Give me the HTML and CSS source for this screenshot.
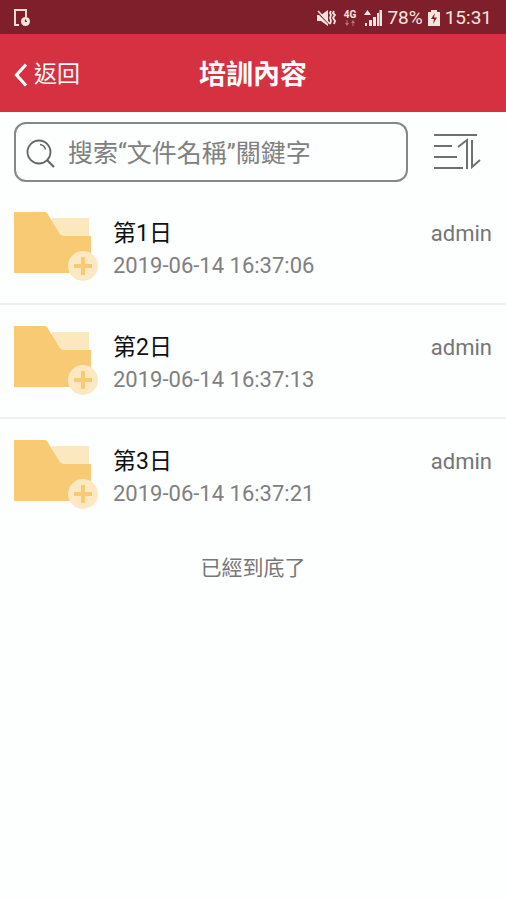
FILE: index.html
```html
<!DOCTYPE html>
<html lang="zh-Hant">

<head>
  <meta charset="utf-8">
  <meta name="viewport" content="width=device-width, initial-scale=1">
  <title>培訓內容</title>
  <link rel="stylesheet" href="styles.css">
</head>

<body>
  <div class="status-bar">
    <svg class="status-note" width="18" height="20" viewBox="0 0 18 20">
      <path d="M6 17H2V2h11v7" fill="none" stroke="#f7dcd8" stroke-width="2" />
      <circle cx="12.500" cy="13.500" r="4.500" fill="#f7e6e0" />
      <path d="M12.500 11.500v2H14" fill="none" stroke="#7f1f2b" stroke-width="1.200" />
    </svg>
    <div class="status-right">
      <svg width="20" height="18" viewBox="0 0 20 18">
        <path d="M1 6h4l7-5v16l-7-5H1z" fill="#f7e6e0" />
        <path d="M2 4l11 11" stroke="#7f1f2b" stroke-width="1.200" />
        <path d="M2 2l12 13" stroke="#f7e6e0" stroke-width="1.500" />
        <path d="M15 2l-1 2 1 2-1 3 1 3-1 3M18 2l-1 2 2 2-2 3 2 3-1 3" fill="none" stroke="#f7e6e0" stroke-width="1.800" />
      </svg>
      <div class="network">
        <span>4G</span>
        <svg width="12" height="6" viewBox="0 0 12 6">
          <path d="M3.500 0v3H5L3 6 1 3h1.500V0zM8.500 6V3H7l2-3 2 3H9.500v3z" fill="#b8767c" />
        </svg>
      </div>
      <svg width="18" height="18" viewBox="0 0 18 18">
        <path d="M0 6l3.500-5L7 6z" fill="#f7e6e0" />
        <path d="M1 14h2v3H1zM5 11h3v6H5zM9 8h3v9H9zM13 4h2v13h-2zM15.500 1H18v16h-2.500z" fill="#f7e6e0" />
      </svg>
      <span class="status-text">78%</span>
      <svg width="12" height="18" viewBox="0 0 12 18">
        <path d="M3 1h6v2h3v14H0V3h3z" fill="#f7e6e0" />
        <path d="M7 4L3 10h3l-1 5 4-6.500H6z" fill="#7f1f2b" />
      </svg>
      <span class="status-text">15:31</span>
    </div>
  </div>

  <header class="header">
    <button class="back" type="button">
      <svg width="14" height="24" viewBox="0 0 14 24">
        <path d="M12 1.500L2.500 12l9.500 10.500" fill="none" stroke="#fff" stroke-width="3.200" />
      </svg>
      返回
    </button>
    <h1>培訓內容</h1>
  </header>

  <div class="search-bar">
    <label class="search-box">
      <svg width="30" height="30" viewBox="0 0 30 30" fill="none" stroke="#666">
        <circle cx="13" cy="14" r="11.500" stroke-width="1.800" />
        <path d="M21 22l7 7" stroke-width="2.200" />
        <path d="M14 6.500c3 .5 5 2.500 5.500 5" stroke-width="1.300" />
      </svg>
      <input type="text" placeholder="搜索“文件名稱”關鍵字" aria-label="搜索">
    </label>
    <button class="sort" type="button" aria-label="排序">
      <svg width="48" height="38" viewBox="0 0 48 38" fill="none" stroke="#707070" stroke-width="2">
        <path d="M1 2h43M1 13h18M1 24h23M1 35h29" />
        <path d="M25 14l9-7v29M39 7v27l8-7" />
      </svg>
    </button>
  </div>

  <svg class="symbols" width="0" height="0">
    <symbol id="folder" viewBox="0 0 84 70">
      <path d="M38 7h37v20H38z" fill="#fce8bf" />
      <path d="M0 1h30c3 0 4 2 6 6l8 13c2 4 4 5 7 5h26v37H0z" fill="#f8ca74" />
      <circle cx="69" cy="55" r="15" fill="#fce9c3" />
      <path d="M69 46v18M60 55h18" stroke="#f8ca74" stroke-width="4" />
    </symbol>
  </svg>

  <ul class="file-list">
    <li class="file-item">
      <svg class="folder" width="84" height="70"><use href="#folder" /></svg>
      <div class="file-info">
        <div class="file-name">第1日</div>
        <div class="file-date">2019-06-14 16:37:06</div>
      </div>
      <div class="file-owner">admin</div>
    </li>
    <li class="file-item">
      <svg class="folder" width="84" height="70"><use href="#folder" /></svg>
      <div class="file-info">
        <div class="file-name">第2日</div>
        <div class="file-date">2019-06-14 16:37:13</div>
      </div>
      <div class="file-owner">admin</div>
    </li>
    <li class="file-item">
      <svg class="folder" width="84" height="70"><use href="#folder" /></svg>
      <div class="file-info">
        <div class="file-name">第3日</div>
        <div class="file-date">2019-06-14 16:37:21</div>
      </div>
      <div class="file-owner">admin</div>
    </li>
  </ul>
  <p class="list-end">已經到底了</p>
</body>

</html>
```
FILE: styles.css
```css
* {
  box-sizing: border-box;
}

body {
  margin: 0;
  background-color: #fdfefe;
  color: #111;
  font-family: Roboto, 'Noto Sans CJK TC', sans-serif;
}

button {
  border: none;
  padding: 0;
  background: none;
  font-family: inherit;
  cursor: pointer;
}

svg {
  display: block;
  flex: none;
}

/* Status bar */
.status-bar {
  display: flex;
  align-items: center;
  justify-content: space-between;
  height: 34px;
  padding: 2px 14px 0 13px;
  background-color: #7f1f2b;
  color: #f7e6e0;
}

.status-right {
  display: flex;
  align-items: center;
  gap: 5px;
}

.status-text {
  font-size: 19px;
  line-height: 24px;
}

.network {
  display: flex;
  flex-direction: column;
  align-items: center;
  margin: 0 3px;
  font-size: 10px;
  font-weight: bold;
  line-height: 10px;
}

/* Header */
.header {
  display: grid;
  grid-template-columns: 1fr auto 1fr;
  align-items: center;
  height: 78px;
  padding: 4px 14px 0;
  background-color: #d63141;
  color: #fff;
}

.back {
  display: flex;
  align-items: center;
  gap: 6px;
  color: #fff;
  font-size: 23px;
  line-height: 32px;
}

h1 {
  margin: 0;
  font-size: 27px;
  font-weight: bold;
  line-height: 40px;
}

/* Search bar */
.search-bar {
  display: flex;
  align-items: center;
  gap: 25px;
  padding: 10px 25px 9px 14px;
}

.search-box {
  display: flex;
  flex: 1;
  align-items: center;
  gap: 12px;
  height: 60px;
  padding: 2px 10px 0;
  border: 2px solid #858788;
  border-radius: 12px;
}

.search-box input {
  flex: 1;
  min-width: 0;
  padding: 2px 0 0;
  border: none;
  outline: none;
  background: none;
  color: #333;
  font-family: inherit;
  font-size: 25px;
  line-height: 36px;
}

.search-box input::placeholder {
  color: #808080;
}

/* File list */
.symbols {
  position: absolute;
}

.file-list {
  margin: 0;
  padding: 0;
  list-style-type: none;
}

.file-item {
  display: flex;
  height: 114px;
  padding: 20px 14px 0;
  border-bottom: 2px solid #eeefef;
}

.file-item:last-child {
  border-bottom: none;
}

.file-info {
  flex: 1;
  margin-left: 15px;
  padding-top: 7px;
}

.file-name {
  font-size: 23px;
  line-height: 32px;
}

.file-date {
  color: #808080;
  font-size: 22px;
  line-height: 32px;
}

.file-owner {
  padding-top: 7px;
  color: #757575;
  font-size: 22px;
  line-height: 32px;
}

.list-end {
  margin: 19px 0;
  color: #777;
  font-size: 21px;
  line-height: 32px;
  text-align: center;
}
```
